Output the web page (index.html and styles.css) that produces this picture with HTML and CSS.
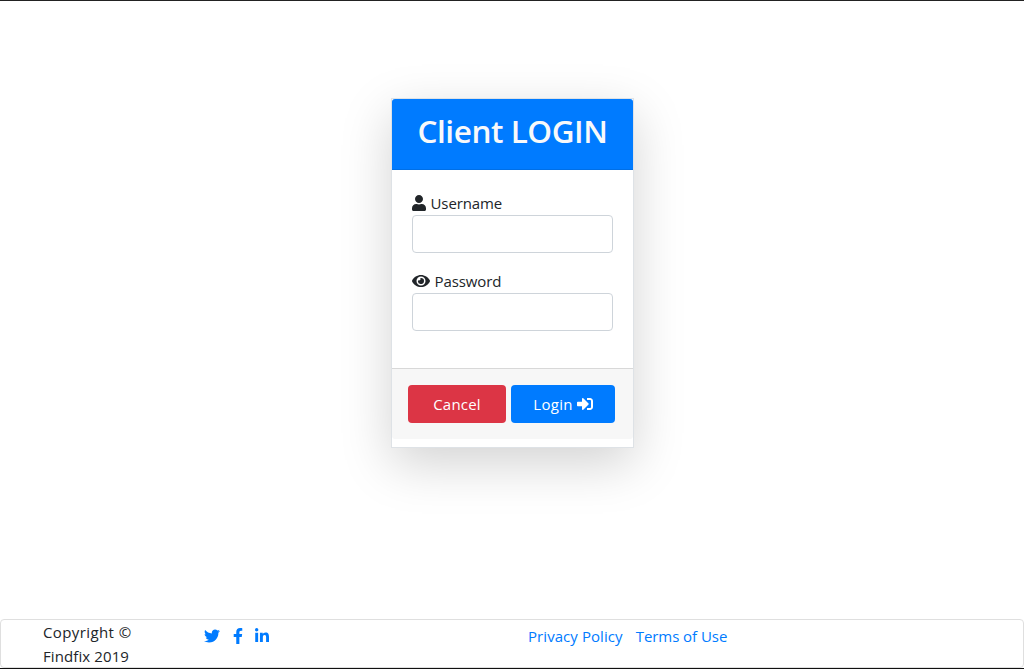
FILE: index.html
```html
<!DOCTYPE html>
<html lang="en">
<head>
<meta charset="utf-8">
<title>Client Login</title>
<link rel="stylesheet" href="styles.css">
</head>
<body>
<main class="stage">
  <form class="card">
    <header class="card-header"><h2 class="title">Client LOGIN</h2></header>
    <div class="card-body">
      <div class="field">
        <label class="label" for="user"><svg class="icon icon-user" viewBox="0 0 448 512"><path d="M224 256c70.7 0 128-57.3 128-128S294.7 0 224 0 96 57.3 96 128s57.3 128 128 128zm89.6 32h-16.7c-22.2 10.2-46.900 16-72.900 16s-50.600-5.800-72.900-16h-16.700C60.200 288 0 348.200 0 422.400V464c0 26.500 21.500 48 48 48h352c26.500 0 48-21.500 48-48v-41.600c0-74.200-60.200-134.400-134.400-134.400z"/></svg><span class="t-user">Username</span></label>
        <input class="input" id="user" type="text">
      </div>
      <div class="field">
        <label class="label" for="pass"><svg class="icon icon-eye" viewBox="0 0 576 512"><path d="M572.52 241.4C518.29 135.59 410.93 64 288 64S57.68 135.64 3.48 241.41a32.350 32.350 0 0 0 0 29.190C57.710 376.410 165.070 448 288 448s230.320-71.640 284.520-177.410a32.350 32.350 0 0 0 0-29.190zM288 400a144 144 0 1 1 144-144 143.930 143.930 0 0 1-144 144zm0-240a95.310 95.310 0 0 0-25.310 3.790 47.850 47.850 0 0 1-66.900 66.900A95.780 95.780 0 1 0 288 160z"/></svg><span class="t-pass">Password</span></label>
        <input class="input" id="pass" type="password">
      </div>
    </div>
    <div class="card-footer">
      <button class="btn cancel" type="button"><span class="t-cancel">Cancel</span></button>
      <button class="btn login" type="button"><span class="t-login">Login</span><svg class="icon icon-in" viewBox="0 0 512 512"><path d="M416 448h-84c-6.600 0-12-5.400-12-12v-40c0-6.600 5.400-12 12-12h84c17.700 0 32-14.300 32-32V160c0-17.700-14.300-32-32-32h-84c-6.600 0-12-5.400-12-12V76c0-6.600 5.400-12 12-12h84c53 0 96 43 96 96v192c0 53-43 96-96 96zm-47-209L201 71c-15-15-41-4.500-41 17v96H24c-13.300 0-24 10.700-24 24v96c0 13.300 10.700 24 24 24h136v96c0 21.500 26 32 41 17l168-168c9.300-9.400 9.300-24.600 0-34z"/></svg></button>
    </div>
  </form>
</main>
<footer class="footer">
  <div class="copy"><span class="t-copy">Copyright ©</span><br><span class="t-year">Findfix 2019</span></div>
  <nav class="social">
    <a href="#" aria-label="Twitter"><svg class="icon icon-in" viewBox="0 0 512 512"><path d="M459.370 151.716c.325 4.548.325 9.097.325 13.645 0 138.720-105.583 298.558-298.558 298.558-59.452 0-114.680-17.219-161.137-47.106 8.447.974 16.568 1.299 25.340 1.299 49.055 0 94.213-16.568 130.274-44.832-46.132-.975-84.792-31.188-98.112-72.772 6.498.974 12.995 1.624 19.818 1.624 9.421 0 18.843-1.300 27.614-3.573-48.081-9.747-84.143-51.980-84.143-102.985v-1.299c13.969 7.797 30.214 12.670 47.431 13.319-28.264-18.843-46.781-51.005-46.781-87.391 0-19.492 5.197-37.360 14.294-52.954 51.655 63.675 129.300 105.258 216.365 109.807-1.624-7.797-2.599-15.918-2.599-24.040 0-57.828 46.782-104.934 104.934-104.934 30.213 0 57.502 12.670 76.670 33.137 23.715-4.548 46.456-13.320 66.599-25.340-7.798 24.366-24.366 44.833-46.132 57.827 21.117-2.273 41.584-8.122 60.426-16.243-14.292 20.791-32.161 39.308-52.628 54.253z"/></svg></a>
    <a href="#" aria-label="Facebook"><svg class="icon icon-fb" viewBox="0 0 320 512"><path d="M279.140 288l14.220-92.660h-88.910v-60.130c0-25.350 12.420-50.060 52.240-50.060h40.420V6.260S260.430 0 225.360 0c-73.220 0-121.080 44.380-121.080 124.720v70.620H22.890V288h81.390v224h100.170V288z"/></svg></a>
    <a href="#" aria-label="LinkedIn"><svg class="icon icon-li" viewBox="0 0 448 512"><path d="M100.280 448H7.400V148.900h92.880zM53.790 108.100C24.090 108.100 0 83.500 0 53.800a53.790 53.790 0 0 1 107.580 0c0 29.700-24.100 54.300-53.790 54.300zM447.900 448h-92.680V302.400c0-34.700-.7-79.200-48.290-79.200-48.290 0-55.690 37.700-55.690 76.700V448h-92.780V148.900h89.080v40.800h1.300c12.400-23.500 42.690-48.300 87.880-48.300 94 0 111.280 61.900 111.280 142.300V448z"/></svg></a>
  </nav>
  <nav class="links"><a class="t-priv" href="#">Privacy Policy</a><a class="t-terms" href="#">Terms of Use</a></nav>
</footer>
</body>
</html>
```
FILE: styles.css
```css
* { box-sizing: border-box; }
body {
  margin: 0;
  height: 669px;
  display: flex;
  flex-direction: column;
  border-top: 1px solid #222;
  border-bottom: 1px solid #111;
  background: #fff;
  color: #212529;
  font: 15px/24px "Open Sans", "Noto Sans", sans-serif;
  overflow: hidden;
}
a { color: #007bff; text-decoration: none; }
.stage { flex: 1; padding: 97px 0 0 391px; }
.card {
  width: 243px;
  height: 350px;
  display: flex;
  flex-direction: column;
  border: 1px solid #dee2e6;
  background: #fff;
  box-shadow: 0 16px 48px rgba(0, 0, 0, .175);
}
.card-header {
  height: 71px;
  padding-top: 12px;
  border-bottom: 1px solid #006fe6;
  border-radius: 3px 3px 0 0;
  background: #007bff;
  text-align: center;
}
.title {
  margin: 0;
  color: #f8f9fa;
  font-size: 31.500px;
  line-height: 40px;
  font-weight: 600;
  letter-spacing: -.45px;
  white-space: nowrap;
}
.card-body { flex: 1; padding: 21px 20px 0; }
.field { margin-bottom: 16px; }
.label { display: flex; align-items: center; height: 24px; }
.icon { display: block; height: 16px; fill: currentColor; flex: none; }
.icon-user, .icon-li { width: 14px; }
.icon-eye { width: 18px; }
.icon-in { width: 16px; }
.icon-fb { width: 10px; }
.label .icon { margin-right: 4.500px; }
.t-user, .t-pass { letter-spacing: -.1px; }
.t-cancel { letter-spacing: .2px; }
.t-login { letter-spacing: .3px; }
.t-copy { letter-spacing: .4px; }
.t-year { letter-spacing: .1px; }
.t-priv { letter-spacing: .07px; }
.t-terms { letter-spacing: -.05px; }
.input {
  display: block;
  width: 100%;
  height: 38px;
  border: 1px solid #ced4da;
  border-radius: 4px;
  background: #fff;
}
.card-footer {
  height: 71px;
  margin-bottom: 8px;
  padding: 16px;
  display: flex;
  gap: 5px;
  border-top: 1px solid #d8d8d8;
  border-radius: 0 0 3px 3px;
  background: #f7f7f7;
}
.btn {
  display: flex;
  align-items: center;
  justify-content: center;
  gap: 4px;
  height: 38px;
  padding: 0;
  border: 0;
  border-radius: 4px;
  color: #fff;
  font: inherit;
}
.cancel { width: 98px; background: #dc3545; }
.login { width: 104px; background: #007bff; }
.footer {
  height: 49px;
  display: flex;
  border: 1px solid #dfdfdf;
  border-radius: 4px;
  padding-left: 42px;
}
.copy { width: 161px; }
.social { width: 324px; display: flex; gap: 12.500px; padding-top: 8px; }
.links { display: flex; gap: 13px; padding-top: 4px; }
```
